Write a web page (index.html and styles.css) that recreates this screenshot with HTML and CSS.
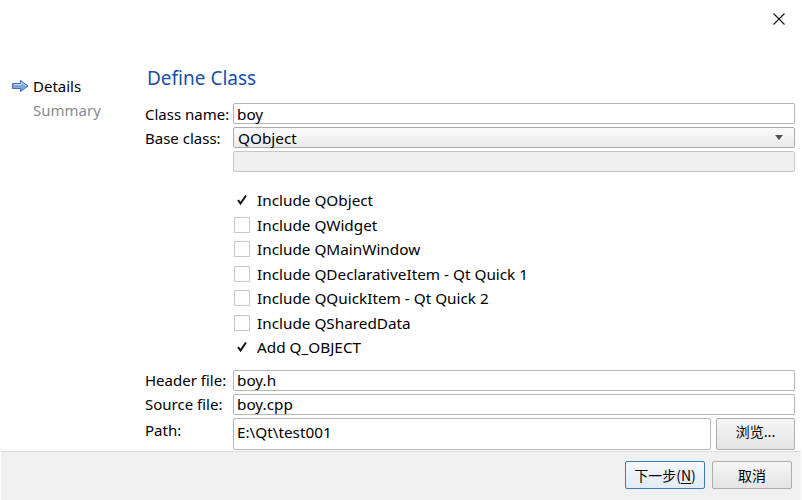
FILE: index.html
```html
<!DOCTYPE html>
<html>
<head>
<meta charset="utf-8">
<link rel="stylesheet" href="styles.css">
</head>
<body>
<div class="window">
  <div class="main">
    <div class="titlebar">
      <span class="close">
        <svg width="12" height="12" viewBox="0 0 12 12"><path d="M0.5 0.5 L11.5 11.5 M11.5 0.5 L0.5 11.5" stroke="#111" stroke-width="1.1" fill="none"/></svg>
      </span>
    </div>
    <div class="body">
      <nav class="steps">
        <div class="step current">
          <svg class="arrow" width="17" height="12" viewBox="0 0 17 12"><path d="M0.5 3.5 H8.5 V0.5 L16 6 L8.5 11.5 V8.5 H0.5 Z" fill="#7aa7e0" stroke="#3f6db3" stroke-width="1"/><path d="M1.5 4.5 H9.5 V2.5 L14 6" fill="none" stroke="#c7dcf5" stroke-width="1"/></svg>
          <span>Details</span>
        </div>
        <div class="step muted"><span>Summary</span></div>
      </nav>
      <section class="content">
        <h1 class="heading">Define Class</h1>
        <div class="form">
          <label class="lbl">Class name:</label>
          <div class="field input"><span>boy</span></div>
          <label class="lbl">Base class:</label>
          <div class="field combo"><span>QObject</span><span class="caret"></span></div>
          <span></span>
          <div class="field disabled"></div>
          <span></span>
          <div class="checks">
            <div class="check"><span class="box"><svg width="12" height="12" viewBox="0 0 12 12"><path d="M2 6 L4.5 9.5 L10 1.5" fill="none" stroke="#111" stroke-width="2"/></svg></span><span>Include QObject</span></div>
            <div class="check"><span class="box"></span><span>Include QWidget</span></div>
            <div class="check"><span class="box"></span><span>Include QMainWindow</span></div>
            <div class="check"><span class="box"></span><span>Include QDeclarativeItem - Qt Quick 1</span></div>
            <div class="check"><span class="box"></span><span>Include QQuickItem - Qt Quick 2</span></div>
            <div class="check"><span class="box"></span><span>Include QSharedData</span></div>
            <div class="check"><span class="box"><svg width="12" height="12" viewBox="0 0 12 12"><path d="M2 6 L4.5 9.5 L10 1.5" fill="none" stroke="#111" stroke-width="2"/></svg></span><span>Add Q_OBJECT</span></div>
          </div>
          <label class="lbl">Header file:</label>
          <div class="field input"><span>boy.h</span></div>
          <label class="lbl">Source file:</label>
          <div class="field input"><span>boy.cpp</span></div>
          <label class="lbl top">Path:</label>
          <div class="pathrow">
            <div class="field input path"><span>E:\Qt\test001</span></div>
            <button class="btn browse">浏览...</button>
          </div>
        </div>
      </section>
    </div>
  </div>
  <footer class="footer">
    <button class="btn primary">下一步(<u>N</u>)</button>
    <button class="btn">取消</button>
  </footer>
</div>
</body>
</html>
```
FILE: styles.css
```css
* { box-sizing: border-box; }
html, body { margin: 0; padding: 0; background: #fff; }
body {
  font-family: "Noto Sans", "Noto Sans CJK SC", sans-serif;
  font-size: 14px;
  color: #000;
}
.window { width: 802px; height: 500px; display: flex; flex-direction: column; }
.main { height: 451px; overflow: hidden; }
.titlebar { height: 60px; display: flex; justify-content: flex-end; padding: 13px 17px 0 0; }
.close { display: block; width: 12px; height: 12px; }
.close svg { display: block; }
.body { display: flex; }
.steps { width: 145px; padding-left: 12px; padding-top: 14px; }
.step { height: 24px; display: flex; align-items: center; font-size: 15px; }
.step .arrow { margin-right: 4px; }
.step.muted { padding-left: 21px; color: #8a8a8a; }
.content { flex: 1; padding-right: 7px; }
.heading { margin: 5px 0 12px 2px; font-size: 19px; font-weight: normal; color: #1c4ea6; line-height: 26px; }
.form { display: grid; grid-template-columns: 88px 1fr; row-gap: 3px; align-items: center; }
.lbl { font-size: 15px; line-height: 20px; }
.lbl.top { align-self: start; padding-top: 2px; }
.field { height: 21px; border: 1px solid #acacac; border-radius: 2px; display: flex; align-items: center; padding: 0 3px; font-size: 15.3px; }
.input { background: #fff; border-color: #b5b5b5; }
.combo { background: linear-gradient(#fbfbfb, #eaeaea); border-color: #acacac; justify-content: space-between; padding-left: 4px; padding-right: 11px; }
.caret { width: 0; height: 0; border-left: 4px solid transparent; border-right: 4px solid transparent; border-top: 5px solid #505050; }
.disabled { background: #efefef; border-color: #c6c6c6; }
.checks { padding: 13px 0 7px 1px; display: flex; flex-direction: column; }
.check { height: 24.5px; display: flex; align-items: center; font-size: 15.3px; }
.box { width: 16px; height: 16px; border: 1px solid #c8c8c8; background: #fff; margin-right: 7px; display: flex; align-items: center; justify-content: center; }
.check .box:has(svg) { border-color: transparent; }
.pathrow { display: flex; gap: 5px; }
.path { flex: 1; height: 32px; align-items: flex-start; padding-top: 3px; }
.btn {
  font-family: "Noto Sans CJK SC", sans-serif; font-size: 14px; color: #000;
  width: 80px; height: 28px; border: 1px solid #adadad; border-radius: 2px;
  background: linear-gradient(#f6f6f6, #e3e3e3); padding: 0;
}
.browse { width: 79px; height: 32px; align-self: flex-start; padding-bottom: 5px; }
.footer { height: 49px; margin: 0 1px 0 1px; border-top: 1px solid #dcdcdc; background: #f0f0f0; display: flex; justify-content: flex-end; align-items: flex-start; padding: 9px 9px 0 0; gap: 7px; }
.primary { border-color: #3c7fb1; background: linear-gradient(#f4f8fc, #e3eaf2); }
.btn u { text-underline-offset: 2px; }
```
